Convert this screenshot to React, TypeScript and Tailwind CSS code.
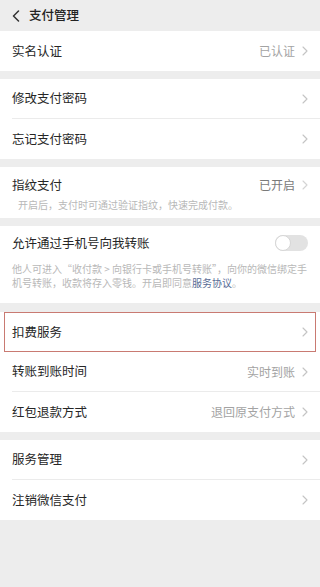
import React from "react";

const font = { fontFamily: '"Noto Sans CJK SC", "Noto Sans", sans-serif' };

const Chevron = ({ color = "#c4c4c4" }: { color?: string }) => (
  <svg width="6" height="10" viewBox="0 0 6 10" fill="none" className="ml-[7px] shrink-0">
    <path d="M1 1l4 4-4 4" stroke={color} strokeWidth="1.1" strokeLinecap="round" strokeLinejoin="round" />
  </svg>
);

function Row({
  label,
  value,
  divider,
}: {
  label: string;
  value?: string;
  divider?: boolean;
}) {
  return (
    <div className="flex h-10 pl-3">
      <div
        className={`flex flex-1 items-center pr-3 ${divider ? "border-b border-[#ebebeb]" : ""}`}
      >
        <span className="flex-1 text-[12.5px] text-[#262626]">{label}</span>
        {value && <span className="text-[12px] text-[#a3a3a3]">{value}</span>}
        <Chevron />
      </div>
    </div>
  );
}

export default function App() {
  return (
    <div className="min-h-[587px] w-[320px] bg-[#ededed]" style={font}>
      {/* Header */}
      <div className="flex h-[31px] items-center pl-3">
        <svg width="8" height="12" viewBox="0 0 8 12" fill="none">
          <path d="M6.5 1L1.5 6l5 5" stroke="#333" strokeWidth="1.5" strokeLinecap="round" strokeLinejoin="round" />
        </svg>
        <span className="ml-[9px] text-[12.5px] font-medium text-[#222]">支付管理</span>
      </div>

      {/* Section 1 */}
      <div className="bg-white">
        <Row label="实名认证" value="已认证" />
      </div>

      {/* Section 2 */}
      <div className="mt-2 bg-white">
        <Row label="修改支付密码" divider />
        <Row label="忘记支付密码" />
      </div>

      {/* Section 3 */}
      <div className="mt-2 h-[51px] bg-white px-3 pt-[8px]">
        <div className="flex h-[20px] items-center">
          <span className="flex-1 text-[12.5px] text-[#262626]">指纹支付</span>
          <span className="text-[12px] text-[#7a7a7a]">已开启</span>
          <Chevron color="#d4d4d4" />
        </div>
        <div className="mt-[3px] pl-[6px] text-[10px] leading-[14px] text-[#b8b8b8]">
          开启后，支付时可通过验证指纹，快速完成付款。
        </div>
      </div>

      {/* Section 4 */}
      <div className="mt-2 h-[77px] bg-white px-3 pt-[7px]">
        <div className="flex h-[20px] items-center">
          <span className="flex-1 text-[12.5px] text-[#262626]">允许通过手机号向我转账</span>
          <div className="relative h-[16px] w-[33px] rounded-full bg-[#e2e2e2]">
            <div className="absolute left-0 top-0 h-[16px] w-[16px] rounded-full border border-[#d6d6d6] bg-white" />
          </div>
        </div>
        <div className="mt-[9px] whitespace-nowrap text-[10px] leading-[14px] text-[#b8b8b8]">
          他人可进入“收付款 &gt; 向银行卡或手机号转账”，向你的微信绑定手
          <br />
          机号转账，收款将存入零钱。开启即同意<span className="text-[#576b95]">服务协议</span>。
        </div>
      </div>

      {/* Section 5 */}
      <div className="mt-[9px] bg-white">
        <div className="relative">
          <Row label="扣费服务" />
          <div className="pointer-events-none absolute inset-y-0 left-[4px] right-[4px] border-[1.5px] border-[#c97a72]" />
        </div>
        <Row label="转账到账时间" value="实时到账" divider />
        <Row label="红包退款方式" value="退回原支付方式" />
      </div>

      {/* Section 6 */}
      <div className="mt-2 bg-white">
        <Row label="服务管理" divider />
        <Row label="注销微信支付" />
      </div>
    </div>
  );
}
